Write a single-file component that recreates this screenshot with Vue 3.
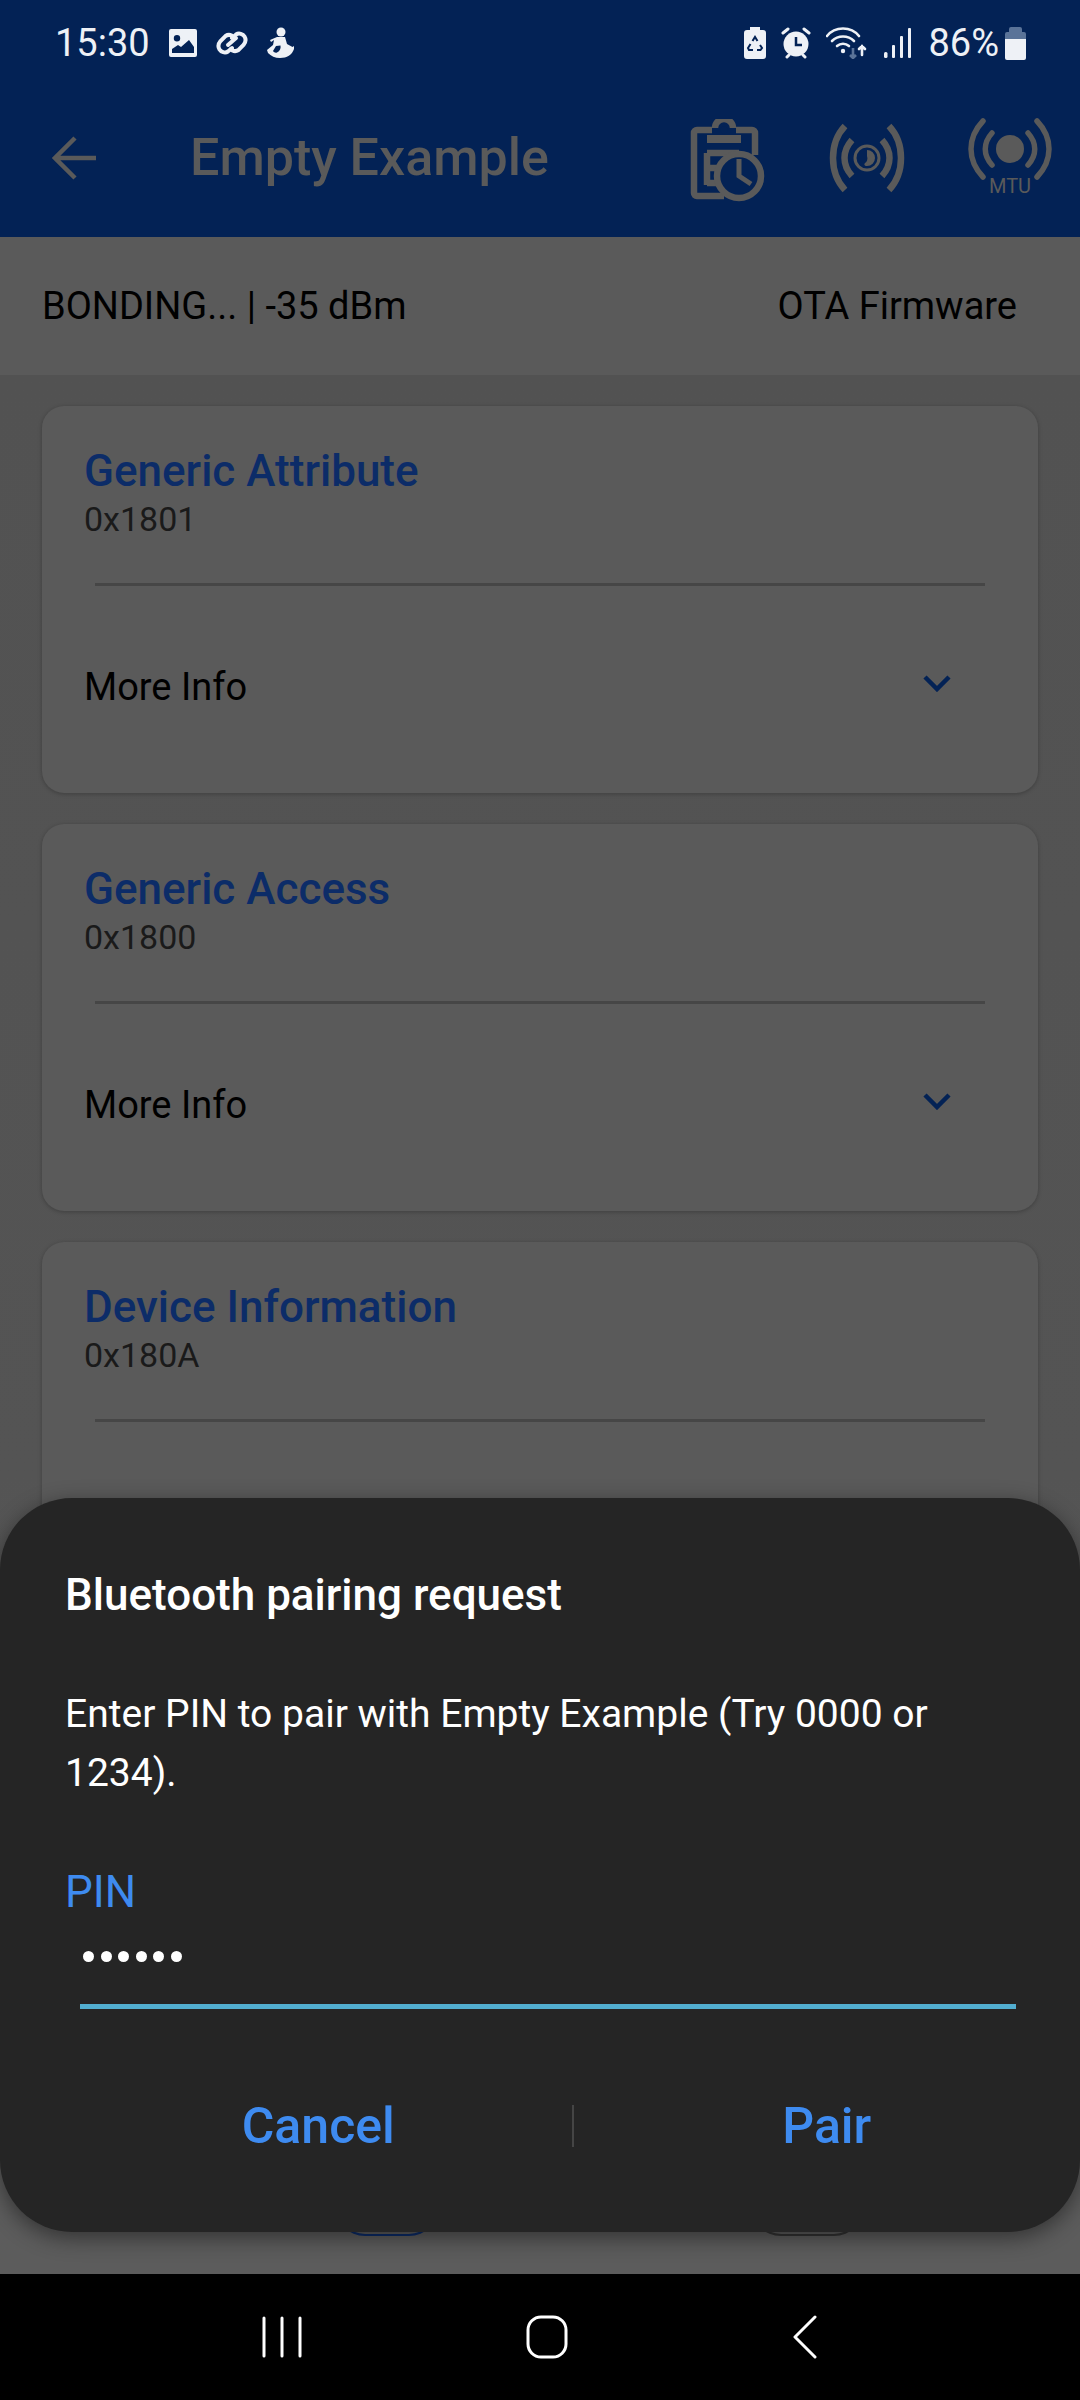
<script setup>
const services = [
  { name: 'Generic Attribute', uuid: '0x1801' },
  { name: 'Generic Access', uuid: '0x1800' },
  { name: 'Device Information', uuid: '0x180A' },
]
</script>

<template>
  <div class="phone">
    <header class="top">
      <div class="status">
        <div class="status-side">
          <span class="time">15:30</span>
          <svg class="si" width="30" height="30" viewBox="0 0 30 30">
            <path fill="#eef1f6" fill-rule="evenodd" d="M3 1h24a2 2 0 0 1 2 2v24a2 2 0 0 1-2 2H3a2 2 0 0 1-2-2V3a2 2 0 0 1 2-2zM9 7a3.2 3.2 0 1 0 0 6.400a3.200 3.200 0 0 0 0-6.400zM4 25h22v-6l-5-7-8 7-3-2-6 4z" />
          </svg>
          <svg class="si link" width="32" height="30" viewBox="0 0 32 30">
            <g fill="none" stroke="#eef1f6" stroke-width="4" stroke-linecap="round">
              <path d="M17 9l-1.500-1.500c-2-1-4-.8-6 .5L4.500 13c-2.500 3-2.500 6-1 8.500s5.500 4 8.500 2l4-3.500" />
              <path d="M15 21l1.500 1.500c2 1 4 .8 6-.5l5-5c2.500-3 2.500-6 1-8.500s-5.500-4-8.500-2l-4 3.500" />
              <path d="M12 17l8-7" />
            </g>
          </svg>
          <svg class="si" width="28" height="32" viewBox="0 0 28 32">
            <circle cx="15" cy="5" r="4.500" fill="#eef1f6" />
            <path fill="#eef1f6" d="M11 10h8l2 7 5.500 3 1.500-1v3c-2 6-7 9-14 9-5 0-9-2-12-5l-1-3 6-5 1-5-3 2-1-2zM10 19l-3 5c1 1.500 2.500 2 4 1.500 3-1.500 4-4 3.500-7z" />
          </svg>
        </div>
        <div class="status-side">
          <svg class="sr" width="22" height="32" viewBox="0 0 22 32">
            <path fill="#eef1f6" fill-rule="evenodd" d="M6 0h10v3h3a3 3 0 0 1 3 3v23a3 3 0 0 1-3 3H3a3 3 0 0 1-3-3V6a3 3 0 0 1 3-3h3z" />
            <path fill="none" stroke="#032255" stroke-width="2" d="M8.500 14l2.500-4 2.500 4M16 18l2 3-1.500 2H13M9 23H5l-1-2 2.500-4" />
          </svg>
          <svg class="sr alarm" width="30" height="32" viewBox="0 0 30 32">
            <circle cx="15" cy="17" r="12.500" fill="#eef1f6" />
            <path fill="none" stroke="#032255" stroke-width="2.500" d="M15 10v8h6" />
            <path fill="none" stroke="#eef1f6" stroke-width="3" stroke-linecap="round" d="M2 6l5-4M28 6l-5-4M6 30l2-2M24 30l-2-2" />
          </svg>
          <svg class="sr wifi" width="42" height="32" viewBox="0 0 42 32">
            <g fill="none" stroke="#eef1f6" stroke-width="2.600" stroke-linecap="round">
              <path d="M1 9C9 -1 25 -1 33 9" />
              <path d="M6 14c6-6 16-6 22 0" />
              <path d="M11 19c3.500-3 8.500-3 12 0" />
              <path d="M36 28v-9M33 22l3-3 3 3" />
            </g>
            <circle cx="17" cy="24" r="2.200" fill="#eef1f6" />
            <path fill="none" stroke="#5a7398" stroke-width="2.600" d="M27 21v10M24 28l3 3 3-3" />
          </svg>
          <svg class="sr" width="28" height="32" viewBox="0 0 28 32">
            <g fill="#eef1f6">
              <rect x="1" y="25" width="3.500" height="6" rx="1.500" />
              <rect x="9" y="18" width="3" height="13" rx="1" />
              <rect x="17" y="9" width="3" height="22" rx="1" />
              <rect x="25" y="1" width="3" height="30" rx="1" />
            </g>
          </svg>
          <span class="pct">86%</span>
          <svg class="batt" width="21" height="33" viewBox="0 0 21 33">
            <path fill="#5a7398" d="M6 0h9a2 2 0 0 1 2 2v3h2a2 2 0 0 1 2 2v5H0V7a2 2 0 0 1 2-2h2V2a2 2 0 0 1 2-2z" />
            <path fill="#eef1f6" d="M0 12h21v19a2 2 0 0 1-2 2H2a2 2 0 0 1-2-2z" />
          </svg>
        </div>
      </div>
      <div class="appbar">
        <svg class="back" width="44" height="44" viewBox="0 0 44 44">
          <path fill="none" stroke="#5a5a5a" stroke-width="4.500" d="M44 22H4M23 2L3 22l20 20" />
        </svg>
        <h1 class="title">Empty Example</h1>
        <div class="actions">
          <svg class="act-log" width="76" height="84" viewBox="0 0 76 84">
            <g fill="none" stroke="#5a5a5a" stroke-width="6.500">
              <path d="M22 11H7a3 3 0 0 0-3 3v60a3 3 0 0 0 3 3h27" />
              <path d="M46 11h16a3 3 0 0 1 3 3v22" />
              <path d="M25 9a9 9 0 0 1 18 0" />
              <path d="M17 20h34" stroke-width="8" />
              <path d="M17 34h32M17 34v32M17 49h14M17 64h10" />
              <circle cx="49" cy="57" r="22" />
              <path d="M49 40v17l12 8" stroke-width="5" />
            </g>
            <circle cx="34" cy="11" r="3.500" fill="#032255" />
          </svg>
          <svg class="act-rssi" width="82" height="70" viewBox="0 0 82 70">
            <g fill="none" stroke="#5a5a5a" stroke-width="6.500">
              <path d="M19 3C3 20 3 50 19 67" />
              <path d="M63 3c16 17 16 47 0 64" />
              <path d="M26 17C16 28 16 42 26 53" />
              <path d="M56 17c10 11 10 25 0 36" />
              <circle cx="41" cy="35" r="12" stroke-width="3" />
            </g>
            <path fill="#5a5a5a" d="M41 27a8 8 0 0 1 0 16c-3 0-3-2-2-3 2-1 3-4 2-7z" />
          </svg>
          <div class="act-mtu">
            <svg width="84" height="62" viewBox="0 0 84 62">
              <g fill="none" stroke="#5a5a5a" stroke-width="5.500" stroke-linecap="round">
                <path d="M15 3C-1 20 -1 42 15 59" />
                <path d="M69 3c16 17 16 39 0 56" />
                <path d="M24 15c-9 10-9 22 0 32" />
                <path d="M60 15c9 10 9 22 0 32" />
              </g>
              <circle cx="42" cy="31" r="14" fill="#5a5a5a" />
            </svg>
            <span class="mtu-label">MTU</span>
          </div>
        </div>
      </div>
    </header>

    <div class="strip">
      <span>BONDING... | -35 dBm</span>
      <span>OTA Firmware</span>
    </div>

    <main class="list">
      <section v-for="s in services" :key="s.uuid" class="card">
        <div class="card-name">{{ s.name }}</div>
        <div class="card-uuid">{{ s.uuid }}</div>
        <div class="card-line"></div>
        <div class="card-more">
          <span>More Info</span>
          <svg width="28" height="18" viewBox="0 0 28 18">
            <path fill="none" stroke="#032255" stroke-width="4.500" d="M2 3l12 12L26 3" />
          </svg>
        </div>
      </section>
      <div class="under-btn left"></div>
      <div class="under-btn right"></div>
    </main>

    <nav class="navbar">
      <svg width="40" height="42" viewBox="0 0 40 42">
        <path fill="none" stroke="#fff" stroke-width="3" stroke-linecap="round" d="M2 2v38M20 2v38M38 2v38" />
      </svg>
      <svg width="42" height="44" viewBox="0 0 42 44">
        <rect x="2" y="2" width="38" height="40" rx="13" fill="none" stroke="#fff" stroke-width="3" />
      </svg>
      <svg width="26" height="44" viewBox="0 0 26 44">
        <path fill="none" stroke="#fff" stroke-width="3" stroke-linecap="round" stroke-linejoin="round" d="M23 2L3 22l20 20" />
      </svg>
    </nav>

    <div class="dialog">
      <h2 class="dlg-title">Bluetooth pairing request</h2>
      <p class="dlg-text">Enter PIN to pair with Empty Example (Try 0000 or 1234).</p>
      <div class="pin-label">PIN</div>
      <div class="pin-input">
        <span v-for="n in 6" :key="n" class="dot"></span>
      </div>
      <div class="dlg-buttons">
        <button class="dlg-btn">Cancel</button>
        <span class="dlg-sep"></span>
        <button class="dlg-btn">Pair</button>
      </div>
    </div>
  </div>
</template>

<style scoped>
.phone {
  position: relative;
  width: 1080px;
  height: 2400px;
  overflow: hidden;
  display: flex;
  flex-direction: column;
  background: #525252;
  font-family: Roboto, "Noto Sans", sans-serif;
  color: #000;
}

.top {
  background: #032255;
  height: 237px;
  flex: none;
}

.status {
  height: 78px;
  padding: 8px 54px 0 55px;
  box-sizing: border-box;
  display: flex;
  justify-content: space-between;
  align-items: center;
}

.status-side {
  display: flex;
  align-items: center;
}

.time {
  font-size: 38px;
  color: #eef1f6;
  margin-right: 18px;
}

.si {
  margin-right: 18px;
}

.sr {
  margin-right: 15px;
}

.pct {
  font-size: 38px;
  color: #eef1f6;
  margin: 0 6px 0 2px;
}

.appbar {
  height: 159px;
  display: flex;
  align-items: center;
  padding: 0 28px 0 52px;
}

.back {
  flex: none;
}

.title {
  margin: 0 0 0 94px;
  font-size: 52px;
  font-weight: 500;
  color: #5a5a5a;
  white-space: nowrap;
}

.actions {
  margin-left: auto;
  display: flex;
  align-items: center;
  gap: 65px;
}

.act-log {
  margin-top: 6px;
  margin-right: -5px;
}

.act-rssi {
  margin-top: 0;
}

.act-mtu {
  display: flex;
  flex-direction: column;
  align-items: center;
  margin-left: -5px;
  margin-top: -2px;
}

.mtu-label {
  font-size: 20px;
  line-height: 18px;
  color: #5a5a5a;
  margin-top: -3px;
}

.strip {
  height: 138px;
  flex: none;
  background: #5a5a5a;
  display: flex;
  justify-content: space-between;
  align-items: center;
  padding: 0 63px 0 42px;
  font-size: 38px;
}

.list {
  position: relative;
  flex: 1;
  min-height: 0;
  overflow: hidden;
  padding: 31px 42px 0;
  display: flex;
  flex-direction: column;
  gap: 31px;
  background: linear-gradient(#525252 0, #545454 1100px, #5c5c5c 1800px);
}

.card {
  flex: none;
  height: 387px;
  box-sizing: border-box;
  background: #5a5a5a;
  border-radius: 22px;
  padding: 40px 42px 0;
  box-shadow: 0 1px 4px rgba(0, 0, 0, 0.25);
}

.card-name {
  font-size: 44px;
  font-weight: 500;
  line-height: 50px;
  color: #0c2c68;
}

.card-uuid {
  font-size: 34px;
  line-height: 40px;
  color: #1a1a1a;
  margin-top: 3px;
}

.card-line {
  height: 3px;
  background: #464646;
  margin: 44px 11px 0;
}

.card-more {
  display: flex;
  justify-content: space-between;
  align-items: center;
  margin-top: 78px;
  padding-right: 45px;
  font-size: 38px;
  line-height: 46px;
}

.card-more svg {
  margin-top: -8px;
}

.under-btn {
  position: absolute;
  bottom: 38px;
  height: 60px;
  box-sizing: border-box;
  border-style: solid;
  border-width: 0 2px 2px;
  border-radius: 0 0 30px 30px;
}

.under-btn.left {
  left: 335px;
  width: 104px;
  border-color: #0c2c68;
}

.under-btn.right {
  left: 751px;
  width: 113px;
  border-color: #333;
}

.navbar {
  height: 126px;
  flex: none;
  background: #000;
  display: flex;
  justify-content: space-around;
  align-items: center;
  padding: 0 150px;
}

.dialog {
  position: absolute;
  left: 0;
  right: 0;
  top: 1498px;
  height: 734px;
  box-sizing: border-box;
  background: #252525;
  border-radius: 72px;
  padding: 70px 65px 0;
  color: #fff;
  box-shadow: 0 6px 22px rgba(0, 0, 0, 0.45);
}

.dlg-title {
  margin: 0;
  font-size: 44px;
  font-weight: 500;
  line-height: 54px;
}

.dlg-text {
  margin: 63px 0 0;
  font-size: 39px;
  line-height: 59px;
}

.pin-label {
  margin-top: 62px;
  font-size: 44px;
  line-height: 54px;
  color: #3e8bf0;
}

.pin-input {
  display: flex;
  gap: 6.500px;
  margin: 24px 0 0 18px;
  height: 48px;
  align-items: flex-start;
  padding-top: 8px;
  box-sizing: border-box;
}

.dot {
  width: 11px;
  height: 11px;
  border-radius: 50%;
  background: #fff;
}

.pin-input {
  width: 936px;
  margin-left: 15px;
  padding-left: 3px;
  border-bottom: 5px solid #52aed0;
  height: 66px;
}

.dlg-buttons {
  display: flex;
  align-items: center;
  margin: 87px -65px 0 0;
  padding-left: 0;
}

.dlg-btn {
  flex: 1;
  background: none;
  border: none;
  padding: 0;
  font-family: inherit;
  font-size: 50px;
  font-weight: 500;
  line-height: 60px;
  color: #3e8bf0;
}

.dlg-sep {
  width: 2px;
  height: 42px;
  background: #454545;
}
</style>

<style>
html,
body {
  margin: 0;
  background: #000;
}
</style>
